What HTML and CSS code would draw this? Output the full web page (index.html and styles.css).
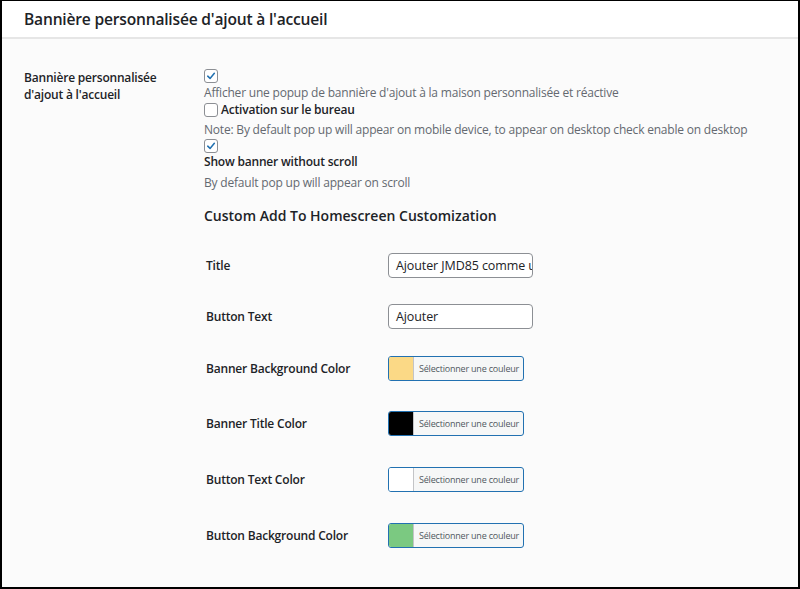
FILE: index.html
```html
<!DOCTYPE html>
<html lang="fr">
<head>
    <meta charset="utf-8">
    <title>Réglages</title>
    <link rel="stylesheet" href="styles.css">
</head>
<body>
    <div class="frame">
        <div class="header">
            <h2>Bannière personnalisée d'ajout à l'accueil</h2>
        </div>
        <div class="content">
            <div class="row">
                <div class="row-label">Bannière personnalisée d'ajout à l'accueil</div>
                <div class="row-field">
                    <div class="check-line first">
                        <span class="check on"><svg viewBox="0 0 14 14" width="14" height="14"><path d="M3.2 7.2 L5.9 9.8 L10.9 3.9" fill="none" stroke="#2271b1" stroke-width="1.8" stroke-linecap="round" stroke-linejoin="round"/></svg></span>
                    </div>
                    <p class="desc">Afficher une popup de bannière d'ajout à la maison personnalisée et réactive</p>
                    <div class="check-line">
                        <span class="check"></span>
                        <span class="check-label">Activation sur le bureau</span>
                    </div>
                    <p class="desc note">Note: By default pop up will appear on mobile device, to appear on desktop check enable on desktop</p>
                    <div class="check-line tight">
                        <span class="check on"><svg viewBox="0 0 14 14" width="14" height="14"><path d="M3.2 7.2 L5.9 9.8 L10.9 3.9" fill="none" stroke="#2271b1" stroke-width="1.8" stroke-linecap="round" stroke-linejoin="round"/></svg></span>
                    </div>
                    <div class="strong-line">Show banner without scroll</div>
                    <p class="desc note">By default pop up will appear on scroll</p>

                    <h3>Custom Add To Homescreen Customization</h3>

                    <div class="sub-table">
                        <div class="sub-row">
                            <div class="sub-label">Title</div>
                            <div class="text-input">Ajouter JMD85 comme u</div>
                        </div>
                        <div class="sub-row gap-27">
                            <div class="sub-label">Button Text</div>
                            <div class="text-input">Ajouter</div>
                        </div>
                        <div class="sub-row gap-30">
                            <div class="sub-label">Banner Background Color</div>
                            <div class="color-btn"><span class="swatch" style="background:#fbd986"></span><span class="color-text">Sélectionner une couleur</span></div>
                        </div>
                        <div class="sub-row gap-31">
                            <div class="sub-label">Banner Title Color</div>
                            <div class="color-btn"><span class="swatch" style="background:#000000"></span><span class="color-text">Sélectionner une couleur</span></div>
                        </div>
                        <div class="sub-row gap-31">
                            <div class="sub-label">Button Text Color</div>
                            <div class="color-btn"><span class="swatch" style="background:#ffffff"></span><span class="color-text">Sélectionner une couleur</span></div>
                        </div>
                        <div class="sub-row">
                            <div class="sub-label">Button Background Color</div>
                            <div class="color-btn"><span class="swatch" style="background:#7bc981"></span><span class="color-text">Sélectionner une couleur</span></div>
                        </div>
                    </div>
                </div>
            </div>
        </div>
    </div>
</body>
</html>
```

FILE: styles.css
```css
html, body {
    margin: 0;
    padding: 0;
}

body {
    font-family: "Open Sans", "Noto Sans", sans-serif;
    font-size: 12px;
    letter-spacing: -0.2px;
    color: #1d2327;
    background: #ffffff;
}

.frame {
    box-sizing: border-box;
    width: 800px;
    height: 589px;
    border: 2px solid #000;
    border-top-width: 1px;
    background: #fbfbfb;
    overflow: hidden;
}

.header {
    background: #ffffff;
    height: 36px;
    border-bottom: 2px solid #e6e6e6;
    padding-left: 22px;
}

.header h2 {
    margin: 0;
    font-size: 15.6px;
    font-weight: 600;
    line-height: 36px;
    letter-spacing: -0.2px;
}

.content {
    padding-top: 30px;
}

.row {
    display: flex;
}

.row-label {
    width: 158px;
    padding-left: 22px;
    padding-right: 22px;
    font-weight: 600;
    line-height: 17px;
}

.row-field {
    flex: 1;
}

/* checkbox lines */
.check-line {
    display: flex;
    align-items: center;
    height: 15px;
    margin-top: 1px;
}

.check-line.first {
    margin-top: 0;
    height: 14px;
}

.check-line.tight {
    margin-top: 0;
}

.check {
    box-sizing: border-box;
    flex: none;
    width: 14px;
    height: 14px;
    border: 1px solid #8c8f94;
    border-radius: 3px;
    background: #fff;
    display: inline-flex;
    align-items: center;
    justify-content: center;
    margin-right: 3px;
}

.check svg {
    display: block;
}

.check-label {
    font-weight: 600;
    font-size: 12px;
}

.desc {
    margin: 1px 0 0;
    line-height: 17px;
    color: #646970;
}

.desc.note {
    margin-top: 4px;
}

.strong-line {
    font-weight: 600;
    line-height: 17px;
    font-size: 12px;
}

h3 {
    margin: 15px 0 0;
    font-size: 14px;
    font-weight: 600;
    line-height: 20px;
    letter-spacing: 0;
}

/* nested settings table */
.sub-table {
    margin-top: 27px;
}

.sub-row {
    display: flex;
    align-items: center;
    height: 25px;
    margin-bottom: 26px;
}

.sub-row.gap-27 {
    margin-bottom: 27px;
}

.sub-row.gap-30 {
    margin-bottom: 30px;
}

.sub-row.gap-31 {
    margin-bottom: 31px;
}

.sub-label {
    width: 182px;
    padding-left: 2px;
    font-weight: 600;
}

.text-input {
    box-sizing: border-box;
    width: 145px;
    height: 25px;
    border: 1px solid #8c8f94;
    border-radius: 4px;
    background: #fff;
    padding: 0 7px;
    line-height: 23px;
    white-space: nowrap;
    overflow: hidden;
    font-size: 12.5px;
    letter-spacing: -0.1px;
}

.color-btn {
    box-sizing: border-box;
    display: flex;
    width: 136px;
    height: 25px;
    border: 1px solid #2271b1;
    border-radius: 3px;
    overflow: hidden;
    background: #f6f7f7;
}

.swatch {
    flex: none;
    width: 24px;
    border-right: 1px solid #c3c4c7;
}

.color-text {
    font-size: 9px;
    letter-spacing: -0.2px;
    line-height: 23px;
    color: #50575e;
    padding-left: 5px;
    white-space: nowrap;
}
```
